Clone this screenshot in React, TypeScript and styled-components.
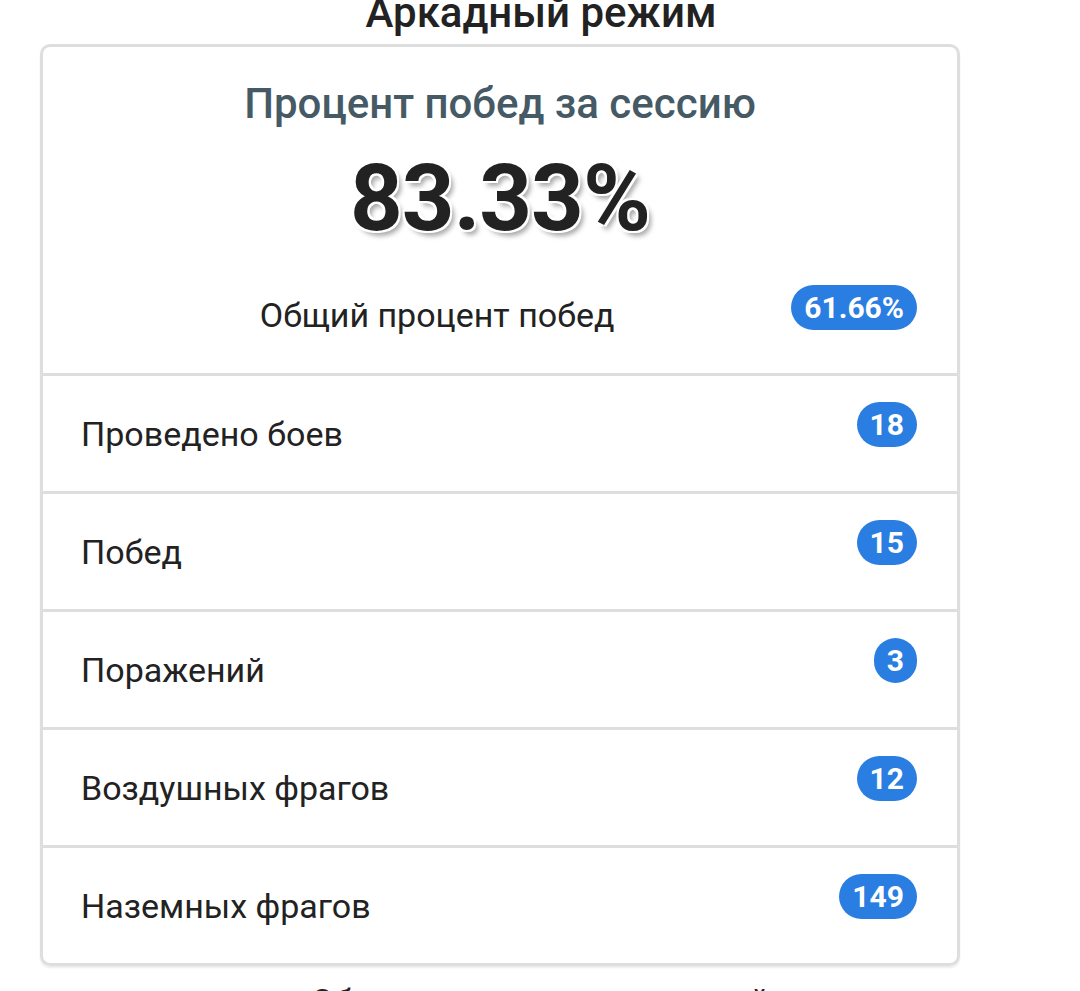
import * as React from "react";
import styled, { createGlobalStyle } from "styled-components";

const GlobalStyle = createGlobalStyle`
  html, body {
    margin: 0;
    padding: 0;
    background: #fff;
  }
  body {
    font-family: Roboto, "Noto Sans", Arial, sans-serif;
    color: #222;
    overflow: hidden;
  }
`;

const Page = styled.div`
  width: 1080px;
  height: 991px;
  overflow: hidden;
`;

const ModeTitle = styled.h2`
  margin: -11px 0 0;
  text-align: center;
  font-size: 42px;
  line-height: 48px;
  font-weight: 500;
  color: #222;
  padding-left: 2px;
`;

const Card = styled.div`
  margin: 7px 0 0 40px;
  width: 914px;
  border: 3px solid #dedede;
  border-radius: 10px;
  box-shadow: 0 2px 2px rgba(0, 0, 0, 0.08);
  overflow: hidden;
`;

const SummaryItem = styled.div`
  padding: 32px 40px 34px;
`;

const SessionTitle = styled.div`
  text-align: center;
  font-size: 42px;
  line-height: 50px;
  font-weight: 500;
  color: #465a66;
`;

const BigPercent = styled.div`
  margin-top: 15px;
  text-align: center;
  font-size: 92px;
  line-height: 110px;
  font-weight: 700;
  color: #222;
  letter-spacing: -1px;
  text-shadow: -2px -2px 0 #fff, 2px -2px 0 #fff, -2px 2px 0 #fff,
    2px 2px 0 #fff, 4px 5px 5px rgba(0, 0, 0, 0.35);
`;

const TotalRow = styled.div`
  margin-top: 31px;
  display: flex;
  align-items: flex-start;
`;

const TotalLabel = styled.div`
  flex: 1;
  text-align: center;
  margin-top: 6px;
  font-size: 34px;
  line-height: 48px;
`;

const Row = styled.div`
  display: flex;
  align-items: flex-start;
  justify-content: space-between;
  border-top: 3px solid #dedede;
  padding: 26px 40px 33px 38px;
`;

const RowLabel = styled.div`
  padding-top: 8px;
  font-size: 34px;
  line-height: 48px;
  color: #222;
`;

const Badge = styled.span`
  display: inline-block;
  flex: none;
  background: #2a7de1;
  color: #fff;
  font-size: 30px;
  line-height: 33px;
  font-weight: 700;
  padding: 6px 13px;
  border-radius: 999px;
  text-align: center;
  min-width: 15px;
`;

const Footer = styled.div`
  margin-top: 11px;
  text-align: center;
  font-size: 34px;
  line-height: 48px;
  color: #222;
`;

const rows = [
  { label: "Проведено боев", value: "18" },
  { label: "Побед", value: "15" },
  { label: "Поражений", value: "3" },
  { label: "Воздушных фрагов", value: "12" },
  { label: "Наземных фрагов", value: "149" },
];

export default function App() {
  return (
    <Page>
      <GlobalStyle />
      <ModeTitle>Аркадный режим</ModeTitle>
      <Card>
        <SummaryItem>
          <SessionTitle>Процент побед за сессию</SessionTitle>
          <BigPercent>83.33%</BigPercent>
          <TotalRow>
            <TotalLabel>Общий процент побед</TotalLabel>
            <Badge>61.66%</Badge>
          </TotalRow>
        </SummaryItem>
        {rows.map((r) => (
          <Row key={r.label}>
            <RowLabel>{r.label}</RowLabel>
            <Badge>{r.value}</Badge>
          </Row>
        ))}
      </Card>
      <Footer>Обновить статистику сессий</Footer>
    </Page>
  );
}
